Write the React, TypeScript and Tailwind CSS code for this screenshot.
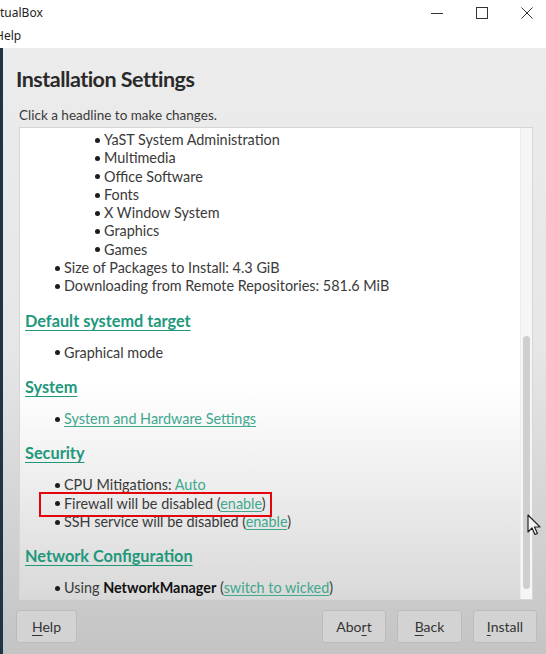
import React from 'react'

const font = { fontFamily: 'Lato, "Noto Sans", sans-serif' }

function Bullet() {
  return <span className="mr-[4px] inline-block size-[5px] shrink-0 rounded-full bg-[#1c1c1c]" />
}

function Item({ level = 1, children }: { level?: 1 | 2; children: React.ReactNode }) {
  return (
    <div className={`flex items-center leading-[18.3px] h-[18.3px] ${level === 2 ? 'pl-[70px]' : 'pl-[30px]'}`}>
      <Bullet />
      <span className="whitespace-nowrap">{children}</span>
    </div>
  )
}

function Heading({ children }: { children: React.ReactNode }) {
  return (
    <div className="mt-[14px] mb-[12px] h-[22px] leading-[22px] text-[16.3px] font-bold text-[#21987b] underline decoration-[1px] underline-offset-[3px]">
      {children}
    </div>
  )
}

function Link({ children }: { children: React.ReactNode }) {
  return <span className="text-[#3fa88f] underline decoration-[1px] underline-offset-[2px]">{children}</span>
}

function Btn({ width, children }: { width: string; children: React.ReactNode }) {
  return (
    <button
      className={`flex h-[33px] ${width} items-center justify-center rounded-[3px] border border-[#bcbcbc] bg-[#d3d3d3] text-[14px] text-[#333]`}
    >
      {children}
    </button>
  )
}

export default function App() {
  return (
    <div className="relative flex h-[654px] w-[546px] flex-col overflow-hidden bg-white text-[#3a3a3a]" style={font}>
      {/* window title bar */}
      <div className="flex h-[24px] items-center bg-white pt-[1px]">
        <span className="text-[12px] text-[#222]" style={{ fontFamily: '"Noto Sans", sans-serif' }}>tualBox</span>
        <div className="ml-auto flex items-center">
          <svg width="14" height="14" className="mr-[31px]" viewBox="0 0 14 14">
            <path d="M1 7.5h12" stroke="#333" strokeWidth="1" />
          </svg>
          <svg width="14" height="14" className="mr-[31px]" viewBox="0 0 14 14">
            <rect x="1.5" y="1.5" width="11" height="11" fill="none" stroke="#333" strokeWidth="1" />
          </svg>
          <svg width="14" height="14" className="mr-[12px]" viewBox="0 0 14 14">
            <path d="M1.5 1.5l11 11M12.5 1.5l-11 11" stroke="#333" strokeWidth="1" />
          </svg>
        </div>
      </div>
      {/* menu bar */}
      <div className="flex h-[24px] items-center bg-white">
        <span className="ml-[-5px] text-[12px] text-[#222]" style={{ fontFamily: '"Noto Sans", sans-serif' }}>Help</span>
      </div>

      <div className="flex flex-1">
        <div className="w-[3px] bg-[#1f3547]" />
        <div className="flex flex-1 flex-col bg-linear-to-b from-[#ececec] via-[#e6e6e6] to-[#c4c4c4]">
          <h1 className="mt-[16px] ml-[13px] h-[30px] text-[21.5px] font-bold leading-[30px] tracking-[-0.5px] text-[#2a2a2a]">
            Installation Settings
          </h1>
          <p className="mt-[12px] ml-[16px] h-[18px] text-[13.5px] leading-[18px]">Click a headline to make changes.</p>

          {/* content panel */}
          <div className="mt-[3px] ml-[16px] flex h-[473px] w-[514px] overflow-hidden border border-[#d6d6d6] bg-linear-to-b from-white via-white via-55% to-[#d9d9d9]">
            <div className="flex-1 pt-[3px] pl-[5px] text-[14.4px]">
              <Item level={2}>YaST System Administration</Item>
              <Item level={2}>Multimedia</Item>
              <Item level={2}>Office Software</Item>
              <Item level={2}>Fonts</Item>
              <Item level={2}>X Window System</Item>
              <Item level={2}>Graphics</Item>
              <Item level={2}>Games</Item>
              <Item>Size of Packages to Install: 4.3 GiB</Item>
              <Item>Downloading from Remote Repositories: 581.6 MiB</Item>

              <Heading>Default systemd target</Heading>
              <Item>Graphical mode</Item>

              <Heading>System</Heading>
              <Item>
                <Link>System and Hardware Settings</Link>
              </Item>

              <Heading>Security</Heading>
              <Item>
                CPU Mitigations: <span className="text-[#3fa88f]">Auto</span>
              </Item>
              <div className="relative">
                <Item>
                  Firewall will be disabled (<Link>enable</Link>)
                </Item>
                <div className="absolute top-[-2.5px] left-[14px] h-[25px] w-[233px] border-2 border-[#e3050b]" />
              </div>
              <Item>
                SSH service will be disabled (<Link>enable</Link>)
              </Item>

              <Heading>Network Configuration</Heading>
              <Item>
                Using <b className="font-bold text-[#111]">NetworkManager</b> (<Link>switch to wicked</Link>)
              </Item>
            </div>
            {/* scrollbar */}
            <div className="flex w-[12px] flex-col border-l border-[#ececec] bg-[#f6f6f8] px-[2px] pb-[10px]">
              <div className="mt-[208px] flex-1 rounded-full bg-[#cfcfcf]" />
            </div>
          </div>

          {/* buttons */}
          <div className="mt-[10px] flex items-center pr-[9px] pl-[13px]">
            <Btn width="w-[61px]">
              <span>
                <span className="underline underline-offset-[3px]">H</span>elp
              </span>
            </Btn>
            <div className="ml-auto flex gap-[11px]">
              <Btn width="w-[64px]">
                <span>
                  Abo<span className="underline underline-offset-[3px]">r</span>t
                </span>
              </Btn>
              <Btn width="w-[65px]">
                <span>
                  <span className="underline underline-offset-[3px]">B</span>ack
                </span>
              </Btn>
              <Btn width="w-[64px]">
                <span>
                  <span className="underline underline-offset-[3px]">I</span>nstall
                </span>
              </Btn>
            </div>
          </div>
        </div>
      </div>

      {/* mouse cursor */}
      <svg className="absolute top-[514px] left-[527px]" width="15" height="22" viewBox="0 0 15 22">
        <path d="M1 1v17l4-4 3 6.5 2.5-1-3-6.5H13z" fill="#f4f4f4" stroke="#222" strokeWidth="1.2" strokeLinejoin="round" />
      </svg>
    </div>
  )
}
